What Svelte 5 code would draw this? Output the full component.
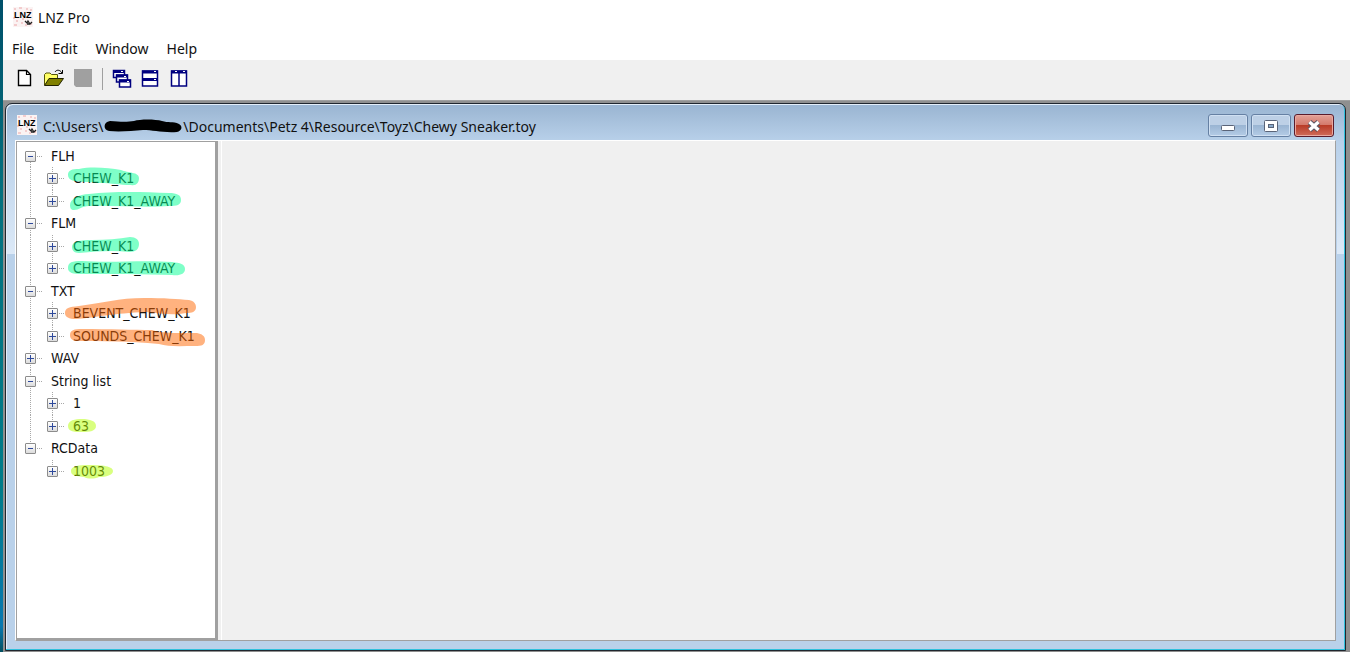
<script>
  const tree = [
    { name: 'FLH', open: true, items: [
      { name: 'CHEW_K1', mark: 'green', d: 'M4 12C4 7 8 6 15 6C28 3 45 5 57 7C64 10 75 9 75 15C75 20 72 23 67 22C55 22 48 20 35 20C22 18 4 21 4 12Z' },
      { name: 'CHEW_K1_AWAY', mark: 'green', d: 'M6 19C6 13 15 8 25 8C50 5 80 6 105 7C113 7 117 9 117 14C117 19 113 20 105 20C80 22 50 19 25 20C18 20 15 24 10 24C7 24 6 22 6 19Z' }
    ] },
    { name: 'FLM', open: true, items: [
      { name: 'CHEW_K1', mark: 'green', d: 'M8 16C8 10 16 9 28 9C42 9 55 8 66 6C72 6 75 9 75 13C75 18 72 21 65 21C50 19 35 20 15 22C10 22 8 19 8 16Z' },
      { name: 'CHEW_K1_AWAY', mark: 'green', d: 'M4 15C4 9 8 8 18 8C45 10 80 7 108 9C116 10 121 11 121 16C121 21 116 23 108 22C80 21 45 21 18 21C9 21 4 20 4 15Z' }
    ] },
    { name: 'TXT', open: true, items: [
      { name: 'BEVENT_CHEW_K1', mark: 'orange', d: 'M1 15C1 10 5 9 15 8C38 5 55 0 80 0C100 0 114 1 125 2C130 3 132 6 132 9C132 14 128 15 122 15C108 18 96 15 82 14C50 15 30 20 12 21C5 21 1 19 1 15Z' },
      { name: 'SOUNDS_CHEW_K1', mark: 'orange', d: 'M6 14C6 9 10 8 18 8C45 8 70 9 88 9C100 13 120 12 133 12C138 13 141 15 141 19C141 24 138 25 131 25C118 25 104 26 95 23C65 20 35 20 14 20C9 20 6 18 6 14Z' }
    ] },
    { name: 'WAV', open: false, items: [] },
    { name: 'String list', open: true, items: [
      { name: '1' },
      { name: '63', mark: 'lime', d: 'M4 15C4 9 11 8 18 8C26 8 32 10 32 15C32 20 26 21 18 21C11 21 4 21 4 15Z' }
    ] },
    { name: 'RCData', open: true, items: [
      { name: '1003', mark: 'lime', d: 'M7 15C7 10 14 9 25 9C38 9 49 10 49 15C49 19 42 21 35 21C30 23 24 23 20 21C12 20 7 20 7 15Z' }
    ] }
  ];

  let groups = $state(tree);

  let rows = $derived(
    groups.flatMap((group, g) => {
      const last = g === groups.length - 1;
      const head = { level: 0, node: group, open: group.open, trunk: last ? 'up' : g === 0 ? 'down' : 'both' };
      if (!group.open) return [head];
      return [
        head,
        ...group.items.map((item, i) => ({
          level: 1,
          node: item,
          open: false,
          outer: !last,
          trunk: i === group.items.length - 1 ? 'up' : 'both'
        }))
      ];
    })
  );

  function toggle(row) {
    if (row.level === 0) row.node.open = !row.node.open;
  }
</script>

{#snippet logo()}
  <svg class="logo" viewBox="0 0 20 20" aria-hidden="true">
    <rect width="20" height="20" fill="#fbf3f3" />
    <path d="M1 2h2M6 1h3M13 2h2M17 3h2M3 14h2M8 16h2M1 18h3M12 18h2M17 17h2M9 12h2M0 11h2" stroke="#f3cccd" stroke-width="2" />
    <text x="1" y="11" font-size="9">LNZ</text>
    <path d="M12 14l2 2 1-2 2 3 2-2M14 17l3 0" fill="none" stroke="#222" stroke-width="1.3" />
  </svg>
{/snippet}

<div class="desktop">
  <div class="app">
    <header class="titlebar">
      {@render logo()}
      <span>LNZ Pro</span>
    </header>

    <nav class="menu">
      <button>File</button>
      <button>Edit</button>
      <button>Window</button>
      <button>Help</button>
    </nav>

    <div class="toolbar">
      <button aria-label="New">
        <svg viewBox="0 0 20 20"><path d="M3.5 1.5h8l4 4v11h-12z" fill="#fff" stroke="#000" stroke-width="1.4" /><path d="M11.5 1.5v4h4" fill="none" stroke="#000" stroke-width="1.2" /></svg>
      </button>
      <button aria-label="Open">
        <svg viewBox="0 0 20 20">
          <path d="M.5 16V5.500l1.500-1.500h4l1.500 1.500h6V9" fill="#ffff66" stroke="#55550a" />
          <path d="M.5 16.500L5 9.500h14.500l-5 7z" fill="#808000" stroke="#222200" />
          <path d="M11 3c1.500-2.500 5-2.500 7 1M18.500 1v3.500h-4" fill="none" stroke="#000" />
        </svg>
      </button>
      <button aria-label="Save" disabled>
        <svg viewBox="0 0 20 20"><path d="M1 0h18v18H3l-2-2z" fill="#a0a0a0" /></svg>
      </button>
      <span class="separator"></span>
      <button aria-label="Cascade">
        <svg viewBox="0 0 20 20" fill="#fff" stroke="#000080" stroke-width="1.5">
          <path d="M1.500 1.500h11v7h-11z" /><path d="M1 2.500h12" stroke-width="3" />
          <path d="M4.500 6h11v7h-11z" /><path d="M4 7h12" stroke-width="3" />
          <path d="M7.500 11h11v7h-11z" /><path d="M7 12h12" stroke-width="3" />
          <path d="M9 2.500h2M12 7.500h2M15 12.500h2" stroke="#fff" stroke-width="1" />
        </svg>
      </button>
      <button aria-label="Tile horizontally">
        <svg viewBox="0 0 20 20" fill="#fff" stroke="#000080" stroke-width="1.5">
          <path d="M1.500 2h15v15h-15z" /><path d="M1 3h16M1 10.500h16" stroke-width="3" />
          <path d="M13 2.500h2M13 10.500h2" stroke="#fff" stroke-width="1" />
        </svg>
      </button>
      <button aria-label="Tile vertically">
        <svg viewBox="0 0 20 20" fill="#fff" stroke="#000080" stroke-width="1.5">
          <path d="M1.500 2h15v15h-15zM9 3v14" /><path d="M1 3h16" stroke-width="3" />
          <path d="M5 2.500h2M13 2.500h2" stroke="#fff" stroke-width="1" />
        </svg>
      </button>
    </div>

    <main class="workspace">
      <section class="child">
        <div class="caption">
          {@render logo()}
          <h1>C:\Users\<span class="redacted"><svg viewBox="0 0 80 14" preserveAspectRatio="none" aria-hidden="true"><path d="M7 2C18 3 25 3 31 2C37 0 52 0 59 2C65 4 70 2 76 5C80 7 79 12 74 13C60 14 50 11 40 11C29 12 16 13 6 12C0 11 0 3 7 2Z" /></svg></span>\Documents\Petz 4\Resource\Toyz\Chewy Sneaker.toy</h1>
          <div class="controls">
            <button aria-label="Minimize">
              <svg viewBox="0 0 16 14"><rect x="1.500" y="6.500" width="13" height="5" rx="1" fill="#fff" stroke="#5a6478" /></svg>
            </button>
            <button aria-label="Maximize">
              <svg viewBox="0 0 16 14"><rect x="1.500" y="1.500" width="13" height="11" rx="1" fill="#fff" stroke="#5a6478" /><rect x="5.500" y="5.500" width="5" height="3" fill="#8aa9ca" stroke="#5a6478" /></svg>
            </button>
            <button class="close" aria-label="Close">
              <svg viewBox="0 0 16 14"><path d="M3.500 3l9 8M12.500 3l-9 8" stroke="#5a5663" stroke-width="5.500" /><path d="M3.500 3l9 8M12.500 3l-9 8" stroke="#fff" stroke-width="3.400" /></svg>
            </button>
          </div>
        </div>

        <div class="client">
          <ul class="tree" role="tree">
            {#each rows as row}
              <li role="treeitem" aria-selected="false" aria-expanded={row.open}>
                {#if row.level === 1}
                  <span class="cell" class:both={row.outer}></span>
                {/if}
                <span class="cell {row.trunk}">
                  <button aria-label="Toggle {row.node.name}" onclick={() => toggle(row)}>
                    <svg viewBox="0 0 11 11"><path d={row.open ? 'M3 5.500h5' : 'M2 5.500h7M5.500 2v7'} stroke="#2f4a9c" /></svg>
                  </button>
                  <i class="stub"></i>
                </span>
                <span class="label">
                  {row.node.name}
                  {#if row.node.mark}
                    <svg class="marker {row.node.mark}" viewBox="0 0 144 30" aria-hidden="true"><path d={row.node.d} /></svg>
                  {/if}
                </span>
              </li>
            {/each}
          </ul>
          <div class="pane"></div>
        </div>
      </section>
    </main>
  </div>
</div>

<style>
  :global(body) {
    margin: 0;
  }

  button {
    padding: 0;
    border: 0;
    background: none;
    font: inherit;
    color: inherit;
  }

  svg {
    display: block;
  }

  .desktop {
    display: flex;
    min-height: 100vh;
    box-sizing: border-box;
    padding-left: 3px;
    background: linear-gradient(#00506a, #04717f 30%, #007c8a 75%, #0878b0 96%, #045060);
    font-family: "Noto Sans", "Open Sans", sans-serif;
    font-size: 14px;
    color: #111;
  }

  .app {
    flex: 1;
    display: flex;
    flex-direction: column;
    background: #fff;
  }

  .titlebar {
    display: flex;
    align-items: center;
    gap: 5px;
    height: 34px;
    padding-left: 10px;
  }

  .logo {
    width: 20px;
    height: 20px;
    flex: none;
    font-family: "Liberation Sans", sans-serif;
    font-weight: bold;
  }

  .menu {
    display: flex;
    align-items: flex-end;
    gap: 18px;
    height: 26px;
    padding: 0 9px;
    line-height: 22px;
  }

  .toolbar {
    display: flex;
    align-items: center;
    gap: 9px;
    height: 37px;
    padding: 0 12px 3px;
    background: #f0f0f0;
  }

  .toolbar svg {
    width: 20px;
    height: 20px;
  }

  .separator {
    width: 1px;
    height: 22px;
    background: #a0a0a0;
  }

  .workspace {
    flex: 1;
    display: flex;
    padding: 2px 4px 1px 2px;
    border-top: 1px solid #a0a0a0;
    background: #8f8f8f;
  }

  .child {
    flex: 1;
    display: flex;
    flex-direction: column;
    padding: 0 9px 9px;
    border: 1px solid #20262e;
    border-radius: 7px 7px 0 0;
    box-shadow: inset -1px -1px #2fc0dc, inset 1px 1px #e4eef9;
    background:
      linear-gradient(#dce9f700, #dce9f7) 0 38px / 9px 112px no-repeat,
      linear-gradient(#dce9f700, #dce9f7) 100% 38px / 8px 112px no-repeat,
      linear-gradient(#99b4d1, #b9d1ea 38px);
  }

  .caption {
    display: flex;
    align-items: center;
    gap: 6px;
    height: 36px;
    padding: 0 2px;
  }

  .caption .logo {
    margin-top: 6px;
  }

  h1 {
    flex: 1;
    display: flex;
    align-items: center;
    margin: 8px 0 0;
    font: inherit;
    white-space: pre;
  }

  .redacted svg {
    width: 80px;
    height: 14px;
  }

  .controls {
    display: flex;
    gap: 3px;
    margin-top: 7px;
  }

  .controls button {
    display: grid;
    place-items: center;
    width: 40px;
    height: 23px;
    border: 1px solid #6580a3;
    border-radius: 3px;
    box-shadow: inset 0 0 0 1px #d0e0f2;
    background: linear-gradient(#bdd0e6 48%, #9ab5d3 50%, #b4cce6);
  }

  .controls svg {
    width: 16px;
    height: 14px;
  }

  .controls .close {
    border-color: #5a1c2c;
    box-shadow: inset 0 0 0 1px #e9a9a0;
    background: linear-gradient(#e3a197, #d4796b 48%, #b93c28 50%, #cf6c5a);
  }

  .client {
    flex: 1;
    display: flex;
    gap: 3px;
    border: 1px solid #fff;
    border-right-color: #a0a0a0;
    border-bottom-color: #a0a0a0;
    background: #f0f0f0;
  }

  .tree {
    width: 195px;
    margin: 0;
    padding: 3px 0 0 3px;
    border: 1px solid #a0a0a0;
    border-right-width: 3px;
    border-bottom-width: 2px;
    background: #fff;
    list-style: none;
    font-family: "DejaVu Sans Condensed", "DejaVu Sans", sans-serif;
  }

  li {
    display: flex;
    height: 22px;
  }

  li:nth-child(even) {
    height: 23px;
  }

  .cell {
    display: flex;
    align-items: center;
    width: 22px;
    padding-left: 5px;
    box-sizing: border-box;
    flex: none;
  }

  .both,
  .up,
  .down {
    background: repeating-linear-gradient(#a8a8a8 0 1px, #fff 1px 2px) 10px 0 / 1px 100% no-repeat;
  }

  .up {
    background-size: 1px 50%;
  }

  .down {
    background-position: 10px 100%;
    background-size: 1px 50%;
  }

  .cell button {
    width: 11px;
    height: 11px;
    box-sizing: border-box;
    border: 1px solid #8c8c8c;
    border-radius: 1px;
    background: linear-gradient(#fff, #dcdcdc);
  }

  .cell button svg {
    width: 11px;
    height: 11px;
    margin: -1px;
  }

  .stub {
    flex: 1;
    height: 1px;
    background: repeating-linear-gradient(90deg, #fff 0 1px, #a8a8a8 1px 2px);
  }

  .label {
    position: relative;
    margin-left: 9px;
    line-height: 22px;
  }

  .marker {
    position: absolute;
    left: -9px;
    top: -4px;
    width: 144px;
    height: 30px;
    pointer-events: none;
  }

  .green {
    fill: rgba(0, 255, 145, 0.5);
  }

  .orange {
    fill: rgba(255, 102, 0, 0.5);
  }

  .lime {
    fill: rgba(180, 255, 0, 0.5);
  }

  .pane {
    flex: 1;
    border-left: 1px solid #fff;
  }
</style>
